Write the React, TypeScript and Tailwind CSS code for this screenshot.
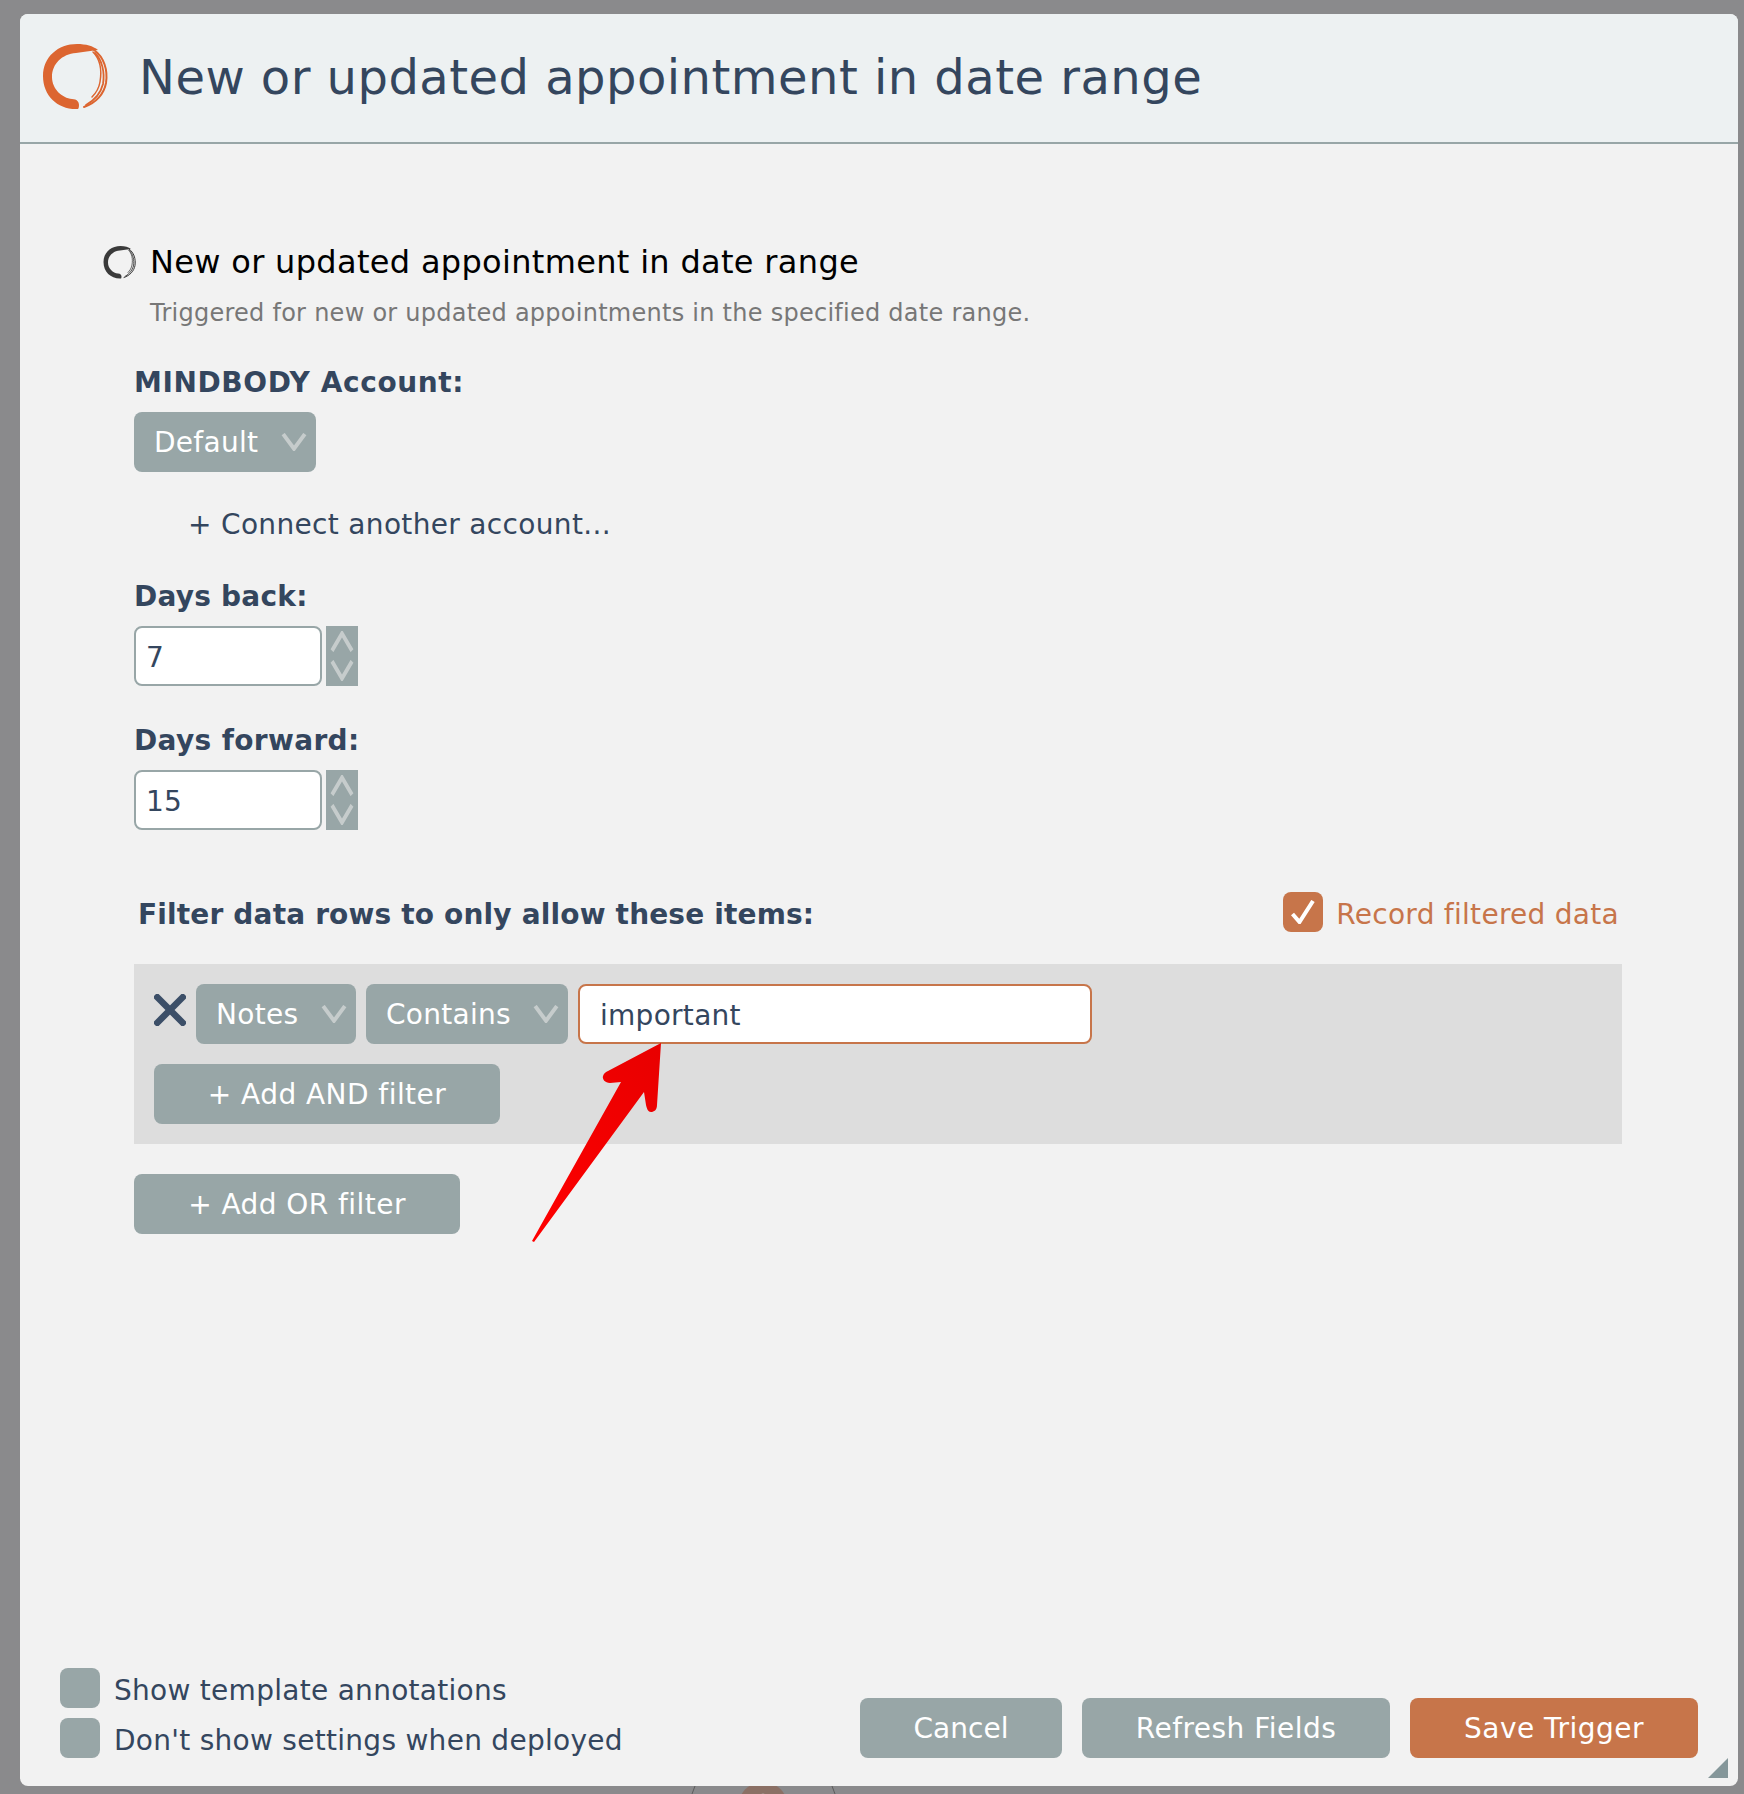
import React from 'react';

const LogoRing = ({ color, className }: { color: string; className: string }) => (
  <svg viewBox="40 42 70 70" className={className} fill="none">
    <path
      fill={color}
      d="M78 109C58 110 43 96 43 76C43 57 58 44 77 44C86 44 93 46 98 50C90 51 83 52 76 53C62 54 52 64 52 77C52 89 62 98 72 99C77 99 79 102 79 105C79 108 78 109 78 109Z"
    />
    <path stroke={color} strokeWidth="2" strokeLinecap="round" d="M94 50C104 57 108 70 106 83C104 94 96 103 84 107" />
    <path stroke={color} strokeWidth="1.8" strokeLinecap="round" d="M95 53C102 60 105 72 103 84C101 92 95 100 86 105" />
    <path stroke={color} strokeWidth="1.5" strokeLinecap="round" d="M93 52C100 59 102 70 100 82C99 88 96 93 92 97" />
  </svg>
);

const Chevron = ({ up = false, className }: { up?: boolean; className: string }) => (
  <svg viewBox="0 0 24 16" preserveAspectRatio="none" className={className} fill="none" stroke="#c6cccc" strokeWidth="3.6">
    <path d={up ? 'M2 15L12 2L22 15' : 'M2 1L12 14L22 1'} />
  </svg>
);

const Select = ({ label, width }: { label: string; width: string }) => (
  <div className={`${width} h-[60px] rounded-lg bg-[#98a6a7] text-white text-[28px] flex items-center justify-between pl-5 pr-[9px]`}>
    <span className="pt-[2px]">{label}</span>
    <Chevron className="w-[26px] h-[18px]" />
  </div>
);

const Button = ({ label, className, primary = false }: { label: string; className: string; primary?: boolean }) => (
  <div className={`${className} h-[60px] pt-[2px] rounded-lg text-white text-[28px] flex items-center justify-center ${primary ? 'bg-[#c7754a]' : 'bg-[#98a6a7]'}`}>
    {label}
  </div>
);

const NumberField = ({ value }: { value: string }) => (
  <div className="flex gap-1 h-[60px]">
    <div className="w-[188px] rounded-lg border-2 border-[#98a6a7] bg-white text-[28px] pl-[10px] pt-[3px] flex items-center">{value}</div>
    <div className="w-8 bg-[#98a6a7] flex flex-col items-center justify-center gap-[8px]">
      <Chevron up className="w-[24px] h-[21px]" />
      <Chevron className="w-[24px] h-[21px]" />
    </div>
  </div>
);

const Label = ({ children, className = '' }: { children: React.ReactNode; className?: string }) => (
  <div className={`font-bold text-[28px] leading-[34px] ${className}`}>{children}</div>
);

const OptionRow = ({ label }: { label: string }) => (
  <div className="flex items-center h-10 gap-[14px]">
    <div className="w-10 h-10 rounded-lg bg-[#98a6a7]" />
    <span className="text-[28px] pt-[6px]">{label}</span>
  </div>
);

export default function App() {
  return (
    <div className="relative h-[1794px] overflow-hidden bg-[#8a8a8c] pt-[14px] pb-2 pl-5 pr-[6px] text-[#34465e] tracking-[0.28px] font-['DejaVu_Sans',sans-serif]">
      {/* bit of the page showing under the dialog */}
      <svg className="absolute left-[680px] top-[1786px]" width="170" height="8" fill="none">
        <path d="M15 0L12 8M152 0L155 8" stroke="#5c5c5c" strokeWidth="1" />
        <circle cx="83" cy="21" r="25" fill="#8b7065" />
        <circle cx="83" cy="10" r="2.5" fill="#b5aaa4" />
      </svg>

      <div className="relative h-full flex flex-col rounded-lg overflow-hidden bg-[#f2f2f2]">
        <header className="h-[130px] shrink-0 flex items-center bg-[#edf1f2] border-b-2 border-[#98a6a7] pl-5 pb-[3px] gap-[29px]">
          <LogoRing color="#dc6530" className="w-[70px] h-[70px]" />
          <h1 className="text-[48px] font-normal leading-none tracking-[0.47px]">New or updated appointment in date range</h1>
        </header>

        <div className="flex-1 flex flex-col">
          <div className="pl-[82px] mt-[99px] flex items-center gap-[13px] text-black">
            <LogoRing color="#3a3a3a" className="w-[35px] h-[35px] blur-[0.7px]" />
            <span className="text-[32px] leading-[38px] tracking-[0.32px]">New or updated appointment in date range</span>
          </div>
          <p className="pl-[130px] mt-[17px] text-[24px] leading-[30px] text-[#777777] tracking-[0.26px]">
            Triggered for new or updated appointments in the specified date range.
          </p>

          <div className="pl-[114px] pr-[116px]">
            <Label className="mt-[38px] tracking-[0.6px]">MINDBODY Account:</Label>
            <div className="mt-3 w-[182px]">
              <Select label="Default" width="w-[182px]" />
            </div>
            <div className="mt-[35px] pl-[54px] text-[28px] leading-[36px] tracking-[0.33px]">+ Connect another account...</div>

            <Label className="mt-[37px] tracking-[0.23px]">Days back:</Label>
            <div className="mt-3">
              <NumberField value="7" />
            </div>
            <Label className="mt-[38px] tracking-[0.35px]">Days forward:</Label>
            <div className="mt-3">
              <NumberField value="15" />
            </div>

            <div className="mt-[62px] h-10 flex items-center justify-between pl-1 pr-[3px]">
              <Label className="pt-[6px] tracking-[0.16px]">Filter data rows to only allow these items:</Label>
              <div className="flex items-center gap-[13px] text-[#c7754a] text-[28px]">
                <div className="w-10 h-10 rounded-lg bg-[#c7754a] flex items-center justify-center">
                  <svg viewBox="0 0 24 24" className="w-6 h-6" fill="none" stroke="#fff" strokeWidth="4">
                    <path d="M1.5 14L8.5 22L22 1" />
                  </svg>
                </div>
                <span className="pt-[6px]">Record filtered data</span>
              </div>
            </div>

            <div className="mt-[32px] h-[180px] bg-[#dddddd] px-5 pt-5">
              <div className="flex items-center gap-[10px]">
                <svg viewBox="0 0 32 32" className="w-8 h-8 mb-2 blur-[0.3px]" fill="none" stroke="#3c4f68" strokeWidth="6.5">
                  <path d="M1 1L31 31M31 1L1 31" />
                </svg>
                <Select label="Notes" width="w-40" />
                <Select label="Contains" width="w-[202px]" />
                <div className="w-[514px] h-[60px] rounded-lg border-2 border-[#c7754a] bg-white text-[28px] pl-5 pt-[3px] flex items-center">important</div>
              </div>
              <div className="mt-5">
                <Button label="+ Add AND filter" className="w-[346px] tracking-[0.45px]" />
              </div>
            </div>

            <div className="mt-[30px]">
              <Button label="+ Add OR filter" className="w-[326px] tracking-[0.45px]" />
            </div>
          </div>

          <div className="mt-auto mb-[28px] pl-10 pr-10 flex items-end justify-between">
            <div className="flex flex-col gap-[10px]">
              <OptionRow label="Show template annotations" />
              <OptionRow label="Don't show settings when deployed" />
            </div>
            <div className="flex gap-5">
              <Button label="Cancel" className="w-[202px] tracking-normal" />
              <Button label="Refresh Fields" className="w-[308px] tracking-[0.47px]" />
              <Button label="Save Trigger" className="w-[288px] tracking-[0.47px]" primary />
            </div>
          </div>
        </div>

        {/* resize grip */}
        <svg className="absolute right-[10px] bottom-2" width="20" height="20">
          <path d="M20 0V20H0Z" fill="#85979a" />
        </svg>

        {/* annotation arrow drawn over the form */}
        <svg className="absolute left-[500px] top-[1015px]" width="150" height="220">
          <defs>
            <linearGradient id="arrowFill" x1="0" y1="1" x2="1" y2="0">
              <stop offset="0" stopColor="#ff0000" />
              <stop offset="1" stopColor="#e80000" />
            </linearGradient>
          </defs>
          <path
            fill="url(#arrowFill)"
            d="M141 14L137 76C137 81 134 83 131 83C128 83 127 80 126 76L124 63L14 213L12 212L101 53L90 54C85 54 82 50 83 47C84 44 86 43 88 42Z"
          />
        </svg>
      </div>
    </div>
  );
}
